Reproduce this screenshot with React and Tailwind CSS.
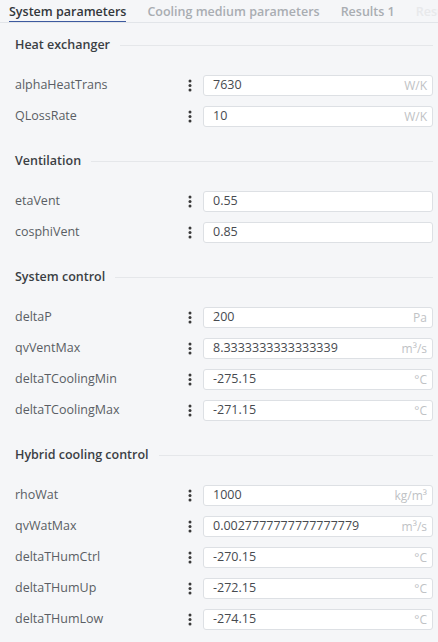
import React from "react";

const sections = [
  {
    title: "Heat exchanger",
    rows: [
      { name: "alphaHeatTrans", value: "7630", unit: "W/K" },
      { name: "QLossRate", value: "10", unit: "W/K" },
    ],
  },
  {
    title: "Ventilation",
    rows: [
      { name: "etaVent", value: "0.55" },
      { name: "cosphiVent", value: "0.85" },
    ],
  },
  {
    title: "System control",
    rows: [
      { name: "deltaP", value: "200", unit: "Pa" },
      { name: "qvVentMax", value: "8.3333333333333339", unit: "m³/s" },
      { name: "deltaTCoolingMin", value: "-275.15", unit: "°C" },
      { name: "deltaTCoolingMax", value: "-271.15", unit: "°C" },
    ],
  },
  {
    title: "Hybrid cooling control",
    rows: [
      { name: "rhoWat", value: "1000", unit: "kg/m³" },
      { name: "qvWatMax", value: "0.0027777777777777779", unit: "m³/s" },
      { name: "deltaTHumCtrl", value: "-270.15", unit: "°C" },
      { name: "deltaTHumUp", value: "-272.15", unit: "°C" },
      { name: "deltaTHumLow", value: "-274.15", unit: "°C" },
    ],
  },
];

const tabs = ["System parameters", "Cooling medium parameters", "Results 1", "Results 2"];

function MoreDots() {
  return (
    <svg width="4" height="13" viewBox="0 0 4 13" className="text-[#3a3a3a]">
      <circle cx="2" cy="2" r="1.5" fill="currentColor" />
      <circle cx="2" cy="6.5" r="1.5" fill="currentColor" />
      <circle cx="2" cy="11" r="1.5" fill="currentColor" />
    </svg>
  );
}

function ParamRow({ name, value, unit }) {
  return (
    <div className="flex items-center h-[21px] pl-[15px] pr-[5px]">
      <span className="flex-1 text-[12.5px] text-[#5a5e64] truncate">{name}</span>
      <span className="w-[26px] flex justify-center">
        <MoreDots />
      </span>
      <div className="w-[230px] h-[21px] flex items-center justify-between bg-white border border-[#dde0e4] rounded-[3px] pl-[9px] pr-[5px]">
        <span className="text-[12.5px] text-[#474a4f]">{value}</span>
        {unit && <span className="text-[12px] text-[#c0c2c5]">{unit}</span>}
      </div>
    </div>
  );
}

function Section({ title, rows }) {
  return (
    <div>
      <div className="flex items-center h-[20px] pl-[15px] pr-[5px]">
        <span className="text-[12.5px] font-semibold text-[#3b3f44]">{title}</span>
        <div className="flex-1 h-px bg-[#e5e7ea] ml-[10px]" />
      </div>
      <div className="mt-[20px] flex flex-col gap-[10px]">
        {rows.map((r) => (
          <ParamRow key={r.name} {...r} />
        ))}
      </div>
    </div>
  );
}

export default function App() {
  return (
    <div
      className="w-full h-[642px] overflow-hidden bg-[#f5f6f8]"
      style={{ fontFamily: '"Open Sans", sans-serif' }}
    >
      {/* tab strip, last tab runs off the right edge */}
      <div className="flex h-[23px] border-b border-[#e2e5e9] pl-[9px] gap-[21px] whitespace-nowrap overflow-hidden">
        {tabs.map((t, i) => (
          <div
            key={t}
            className={
              i === 0
                ? "h-[23px] -mb-px pt-[3px] border-b-2 border-[#3d5a9f] text-[12.5px] font-semibold text-[#33373c]"
                : i === 3
                ? "h-[23px] pt-[3px] text-[12.5px] font-semibold text-[#e8e9eb]"
                : "h-[23px] pt-[3px] text-[12.5px] font-semibold text-[#a9adb2]"
            }
          >
            {t}
          </div>
        ))}
      </div>

      <div className="pt-[12px] flex flex-col gap-[24px]">
        {sections.map((s) => (
          <Section key={s.title} {...s} />
        ))}
      </div>
    </div>
  );
}
